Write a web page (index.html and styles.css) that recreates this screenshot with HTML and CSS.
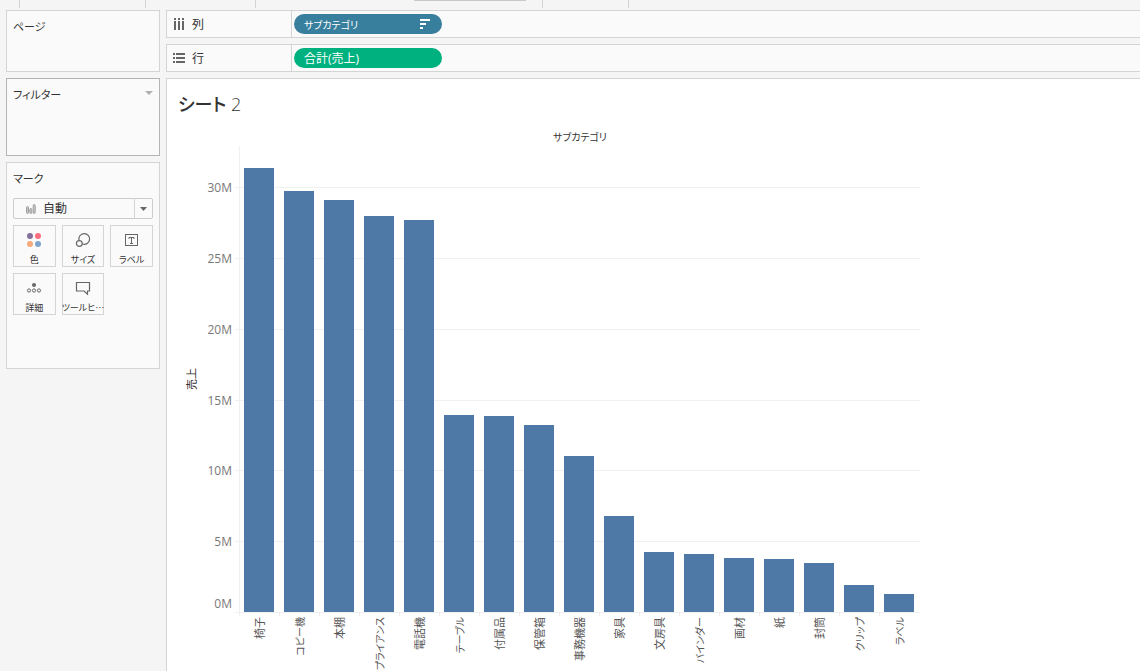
FILE: index.html
```html
<!DOCTYPE html>
<html lang="ja">
<head>
<meta charset="utf-8">
<title>シート 2</title>
<link rel="stylesheet" href="styles.css">
</head>
<body>
<div class="toolbar">
  <span class="group group-a"></span>
  <span class="group group-b"></span>
  <span class="group group-c"></span>
  <span class="group group-d"><span class="fit-box"></span></span>
  <span class="group group-e"></span>
</div>
<div class="workspace">
  <aside class="side">
    <section class="card card-pages"><h2 class="card-title">ページ</h2></section>
    <section class="card card-filters">
      <h2 class="card-title">フィルター</h2>
      <button class="card-menu" type="button" aria-label="フィルター メニュー"><svg width="8" height="4" viewBox="0 0 8 4"><path d="M0 0h8L4 4z" fill="#b0b0b0"/></svg></button>
    </section>
    <section class="card card-marks">
      <h2 class="card-title">マーク</h2>
      <div class="mark-type">
        <select class="mark-select" aria-label="マーク タイプ"><option>自動</option></select>
        <svg class="mark-icon" width="10" height="10" viewBox="0 0 10 10" fill="#c4c4c4" stroke="#a0a0a0"><rect x=".5" y="2.500" width="2" height="7" rx="1"/><rect x="3.800" y="4.500" width="2" height="5" rx="1"/><rect x="7.200" y=".5" width="2" height="9" rx="1"/></svg>
        <span class="mark-arrow"><svg width="8" height="4" viewBox="0 0 8 4"><path d="M0 0h7L3.500 4z" fill="#666"/></svg></span>
      </div>
      <div class="mark-grid">
        <button class="mark" type="button">
          <svg width="16" height="16" viewBox="0 0 16 16"><circle cx="4" cy="4" r="3" fill="#85709a"/><circle cx="12" cy="4" r="3" fill="#fb6e80"/><circle cx="4" cy="12" r="3" fill="#f6aa7c"/><circle cx="12" cy="12" r="3" fill="#7fa5cf"/></svg>
          <span>色</span>
        </button>
        <button class="mark" type="button">
          <svg width="16" height="16" viewBox="0 0 16 16" fill="none" stroke="#666" stroke-width="1.200"><path d="M4 8.300A5.400 5.400 0 1 1 7.300 12"/><circle cx="4.300" cy="11.500" r="2.900"/></svg>
          <span>サイズ</span>
        </button>
        <button class="mark" type="button">
          <svg width="16" height="16" viewBox="0 0 16 16" fill="none" stroke="#666"><rect x="1.500" y="2.500" width="12" height="11"/><path d="M5 7V5.500h5V7M7.500 5.500v6M6 11.500h3"/></svg>
          <span>ラベル</span>
        </button>
        <button class="mark" type="button">
          <svg width="16" height="16" viewBox="0 0 16 16" fill="none" stroke="#666"><circle cx="8" cy="5" r="2" fill="#666" stroke="none"/><circle cx="3" cy="10.500" r="1.600"/><circle cx="8" cy="10.500" r="1.600"/><circle cx="13" cy="10.500" r="1.600"/></svg>
          <span>詳細</span>
        </button>
        <button class="mark" type="button">
          <svg width="16" height="16" viewBox="0 0 16 16" fill="none" stroke="#666" stroke-width="1.200"><path d="M1.500 2.500h13v8.500h-2v3.200L9 11H1.500z"/></svg>
          <span>ツールヒ…</span>
        </button>
      </div>
    </section>
  </aside>
  <main class="main">
    <section class="shelf">
      <div class="shelf-name">
        <svg width="12" height="12" viewBox="0 0 12 12" fill="#666"><path d="M1 0h2v2H1zM5 0h2v2H5zM9 0h2v2H9zM1 3h2v9H1zM5 3h2v9H5zM9 3h2v9H9z"/></svg>
        <span>列</span>
      </div>
      <div class="shelf-drop">
        <button class="pill pill-dimension" type="button"><span>サブカテゴリ</span><svg width="10" height="10" viewBox="0 0 10 10" fill="#fff"><path d="M0 0h10v2H0zM0 4h6v2H0zM0 8h3v2H0z"/></svg></button>
      </div>
    </section>
    <section class="shelf">
      <div class="shelf-name">
        <svg width="12" height="12" viewBox="0 0 12 12" fill="#666"><path d="M0 1h2v2H0zM3 1h9v2H3zM0 5h2v2H0zM3 5h9v2H3zM0 9h2v2H0zM3 9h9v2H3z"/></svg>
        <span>行</span>
      </div>
      <div class="shelf-drop">
        <button class="pill pill-measure" type="button"><span>合計(売上)</span></button>
      </div>
    </section>
    <section class="sheet">
      <h1 class="sheet-title">シート <span class="sheet-number">2</span></h1>
      <div class="chart">
        <div class="field-title">サブカテゴリ</div>
        <div class="axis-title"><span>売上</span></div>
        <div class="axis">
          <span class="axis-rest"></span>
          <div class="step"><span>30M</span></div>
          <div class="step"><span>25M</span></div>
          <div class="step"><span>20M</span></div>
          <div class="step"><span>15M</span></div>
          <div class="step"><span>10M</span></div>
          <div class="step"><span>5M</span><span class="zero">0M</span></div>
        </div>
        <div class="lines">
          <span class="axis-rest"></span>
          <span class="line"></span><span class="line"></span><span class="line"></span>
          <span class="line"></span><span class="line"></span><span class="line"></span>
        </div>
        <div class="bars">
          <div class="bar" style="--value:31.34"></div>
          <div class="bar" style="--value:29.72"></div>
          <div class="bar" style="--value:29.08"></div>
          <div class="bar" style="--value:27.96"></div>
          <div class="bar" style="--value:27.67"></div>
          <div class="bar" style="--value:13.91"></div>
          <div class="bar" style="--value:13.84"></div>
          <div class="bar" style="--value:13.2"></div>
          <div class="bar" style="--value:11.01"></div>
          <div class="bar" style="--value:6.78"></div>
          <div class="bar" style="--value:4.24"></div>
          <div class="bar" style="--value:4.09"></div>
          <div class="bar" style="--value:3.81"></div>
          <div class="bar" style="--value:3.74"></div>
          <div class="bar" style="--value:3.46"></div>
          <div class="bar" style="--value:1.91"></div>
          <div class="bar" style="--value:1.27"></div>
        </div>
        <div class="names">
          <div class="name"><span>椅子</span></div>
          <div class="name kana"><span>コピー機</span></div>
          <div class="name"><span>本棚</span></div>
          <div class="name kana"><span>プライアンス</span></div>
          <div class="name"><span>電話機</span></div>
          <div class="name kana"><span>テーブル</span></div>
          <div class="name"><span>付属品</span></div>
          <div class="name"><span>保管箱</span></div>
          <div class="name"><span>事務機器</span></div>
          <div class="name"><span>家具</span></div>
          <div class="name"><span>文房具</span></div>
          <div class="name kana"><span>バインダー</span></div>
          <div class="name"><span>画材</span></div>
          <div class="name"><span>紙</span></div>
          <div class="name"><span>封筒</span></div>
          <div class="name kana"><span>クリップ</span></div>
          <div class="name kana"><span>ラベル</span></div>
        </div>
      </div>
    </section>
  </main>
</div>
</body>
</html>
```
FILE: styles.css
```css
* { box-sizing: border-box; }

body {
  margin: 0;
  height: 100vh;
  display: flex;
  flex-direction: column;
  overflow: hidden;
  background: #f5f5f5;
  color: #333;
  font: 12px/16px "Open Sans", "Noto Sans CJK JP", sans-serif;
  font-feature-settings: "palt";
}

svg { display: block; flex: none; }
h1, h2 { margin: 0; font-weight: 400; }
button, select { font: inherit; font-feature-settings: inherit; color: inherit; }

/* Lower edge of the toolbar */
.toolbar { display: flex; flex: none; height: 10px; }
.group { height: 8px; border-right: 1px solid #d4d4d4; }
.group-a { width: 20px; }
.group-b { width: 126px; }
.group-c { width: 110px; }
.group-d { width: 287px; display: flex; justify-content: flex-end; padding-right: 16px; }
.group-e { width: 86px; }
.fit-box { width: 112px; height: 1px; background: #c8c8c8; }

.workspace {
  flex: 1;
  min-height: 0;
  display: grid;
  grid-template-columns: 154px minmax(0, 1fr);
  gap: 6px;
  padding-left: 6px;
}

/* Cards */
.side { display: flex; flex-direction: column; gap: 6px; }
.card {
  display: flex;
  flex-wrap: wrap;
  align-content: flex-start;
  justify-content: space-between;
  padding: 8px 6px;
  background: #fafafa;
  border: 1px solid #d4d4d4;
}
.card-title { font-size: 11px; line-height: 16px; }
.card-pages { min-height: 62px; }
.card-filters { min-height: 78px; border-color: #b4b4b4; }
.card-marks { min-height: 207px; }
.card-menu { height: 12px; padding: 0; border: 0; background: none; display: flex; align-items: center; }

.mark-type { width: 100%; display: grid; margin-top: 11px; }
.mark-type > * { grid-area: 1 / 1; }
.mark-select {
  appearance: none;
  width: 100%;
  height: 21px;
  padding: 0 20px 0 29px;
  border: 1px solid #ccc;
  border-radius: 2px;
  background: #fafafa;
}
.mark-icon { align-self: center; margin-left: 13px; pointer-events: none; }
.mark-arrow {
  justify-self: end;
  width: 19px;
  display: flex;
  align-items: center;
  justify-content: center;
  border-left: 1px solid #d4d4d4;
  pointer-events: none;
}
.mark-grid { width: 100%; display: grid; grid-template-columns: repeat(3, minmax(0, 1fr)); gap: 6px; margin-top: 6px; }
.mark {
  height: 42px;
  display: flex;
  flex-direction: column;
  align-items: center;
  justify-content: space-between;
  padding: 6px 0 0;
  border: 1px solid #d4d4d4;
  background: #fafafa;
  font-family: "Noto Sans CJK JP", sans-serif;
  font-size: 9px;
  line-height: 12px;
  white-space: nowrap;
}

/* Shelves */
.main { display: flex; flex-direction: column; gap: 6px; min-height: 0; }
.shelf {
  flex: none;
  display: flex;
  height: 28px;
  background: #fafafa;
  border: 1px solid #d4d4d4;
  border-right: 0;
}
.shelf-name { width: 125px; display: flex; align-items: center; gap: 7px; padding-left: 6px; border-right: 1px solid #d4d4d4; }
.shelf-name span, .pill span { padding-top: 2px; }
.shelf-drop { flex: 1; padding: 3px 2px; }
.pill {
  width: 148px;
  height: 20px;
  display: flex;
  align-items: center;
  justify-content: space-between;
  padding: 0 12px 0 10px;
  border: 0;
  border-radius: 10px;
  color: #fff;
}
.pill-dimension { background: #387f9e; font-size: 10px; }
.pill-measure { background: #00b180; }

/* Sheet */
.sheet {
  flex: 1;
  min-height: 0;
  overflow: hidden;
  padding: 11px;
  background: #fff;
  border: solid #d4d4d4;
  border-width: 1px 0 0 1px;
}
.sheet-title { font-size: 18px; line-height: 28px; font-weight: 500; }
.sheet-number { font-weight: 300; }
.chart {
  --max: 32.9;
  display: grid;
  grid-template-columns: 28px 29px 5px minmax(0, 1fr);
  grid-template-rows: auto 466px auto;
  width: 100%;
  max-width: 742px;
  margin-top: 10px;
}
.field-title { grid-area: 1 / 4; padding: 1px 0; text-align: center; font-size: 10px; }
.axis-title { grid-area: 2 / 1; display: flex; align-items: center; justify-content: center; font-size: 11px; }
.axis-title span, .name span {
  writing-mode: vertical-rl;
  text-orientation: sideways;
  transform: rotate(180deg);
  white-space: nowrap;
}
.axis, .lines { display: grid; grid-template-rows: 2.9fr repeat(6, 5fr); }
.axis { grid-area: 2 / 2; color: #787878; text-align: right; }
.step { display: flex; flex-direction: column; justify-content: space-between; }
.step span { margin-top: -7px; padding-right: 3px; }
.step .zero { margin-top: 0; }
.lines { grid-area: 2 / 3 / 3 / 5; border-bottom: 1px solid #f0f0f0; margin-bottom: -1px; }
.line { border-top: 1px solid #f0f0f0; }
.bars {
  grid-area: 2 / 4;
  display: grid;
  grid-template-columns: repeat(17, 1fr);
  align-items: end;
  box-shadow: -1px 0 #f0f0f0;
}
.bar { height: calc(var(--value) / var(--max) * 100%); margin: 0 6px 0 4px; background: #4e79a7; }
.names { grid-area: 3 / 4; display: grid; grid-template-columns: repeat(17, 1fr); color: #555; font-size: 11px; }
.name { display: flex; align-items: flex-start; justify-content: center; padding-top: 5px; }
.kana { font-size: 10px; }
.name::before { content: ""; width: 1px; height: 3px; margin: -4px auto 0 -1px; background: #f0f0f0; }
.name::after { content: ""; width: 1px; margin-left: auto; }
```
